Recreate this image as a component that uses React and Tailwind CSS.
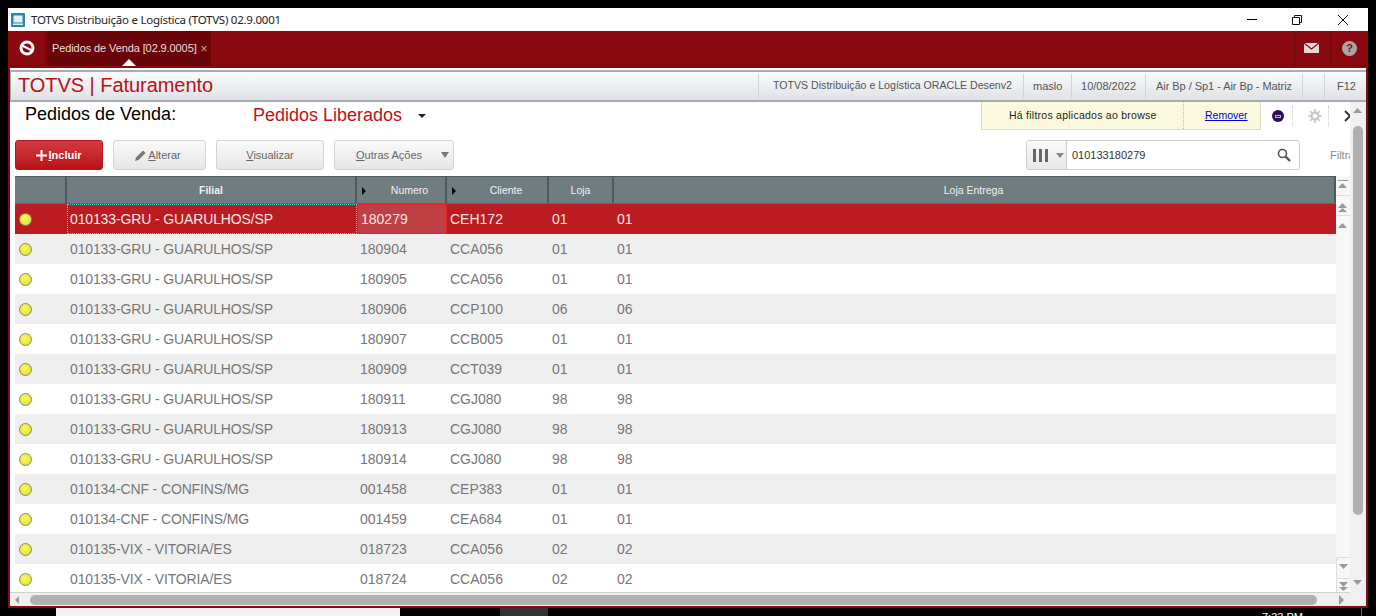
import React from 'react';

const rows = [
  ['010133-GRU - GUARULHOS/SP', '180279', 'CEH172', '01', '01'],
  ['010133-GRU - GUARULHOS/SP', '180904', 'CCA056', '01', '01'],
  ['010133-GRU - GUARULHOS/SP', '180905', 'CCA056', '01', '01'],
  ['010133-GRU - GUARULHOS/SP', '180906', 'CCP100', '06', '06'],
  ['010133-GRU - GUARULHOS/SP', '180907', 'CCB005', '01', '01'],
  ['010133-GRU - GUARULHOS/SP', '180909', 'CCT039', '01', '01'],
  ['010133-GRU - GUARULHOS/SP', '180911', 'CGJ080', '98', '98'],
  ['010133-GRU - GUARULHOS/SP', '180913', 'CGJ080', '98', '98'],
  ['010133-GRU - GUARULHOS/SP', '180914', 'CGJ080', '98', '98'],
  ['010134-CNF - CONFINS/MG', '001458', 'CEP383', '01', '01'],
  ['010134-CNF - CONFINS/MG', '001459', 'CEA684', '01', '01'],
  ['010135-VIX - VITORIA/ES', '018723', 'CCA056', '02', '02'],
  ['010135-VIX - VITORIA/ES', '018724', 'CCA056', '02', '02'],
];

const gridCols = 'grid grid-cols-[52px_290px_90px_102px_65px_1fr]';

const Arrow = ({ down = false, double = false, bar = false, className = '' }) => (
  <svg width="10" height="14" viewBox="0 0 10 14" className={className}>
    {bar && <rect x="0" y={down ? 12 : 1} width="10" height="1" fill="#999" />}
    <path d={down ? 'M0 3h9L4.500 8z' : 'M0 9h9L4.500 4z'} fill="#999" />
    {double && <path d={down ? 'M0 8h9L4.500 12z' : 'M0 13h9L4.500 9z'} fill="#999" />}
  </svg>
);

const Led = () => (
  <span className="block w-[13px] h-[13px] rounded-full border border-[#8a8a66] bg-[radial-gradient(circle_at_45%_40%,#fbfb60,#dcdc20)]" />
);

const ToolButton = ({ className = '', children }) => (
  <button className={`h-[30px] flex items-center justify-center rounded-[3px] border border-[#d4d4d4] bg-gradient-to-b from-[#fafafa] to-[#e6e6e6] text-[11px] text-[#666] ${className}`}>
    {children}
  </button>
);

const HeaderCell = ({ sort = false, children, className = '' }) => (
  <div className={`relative flex items-center justify-center pt-px border-r-2 border-[#4f5a5e] text-[10.500px] text-[#f1f1f1] ${className}`}>
    {sort && <span className="absolute left-[5px] top-[10px] w-0 h-0 border-y-[4px] border-y-transparent border-l-[4px] border-l-black" />}
    {children}
  </div>
);

export default function App() {
  return (
    <div className="w-[1376px] h-[616px] bg-black overflow-hidden pt-2 flex flex-col font-['Liberation_Sans',sans-serif]">
      <div className="w-[1360px] h-[600px] ml-2 flex flex-col shrink-0">
        {/* title bar */}
        <div className="h-[23px] bg-white flex items-center shrink-0">
          <svg width="14" height="14" viewBox="0 0 14 14" className="ml-[3px]">
            <rect width="14" height="14" rx="1" fill="#2b87a8" />
            <rect x="2.500" y="2.500" width="9" height="7" fill="#dff1f7" />
            <rect x="2" y="10.500" width="10" height="1.500" fill="#dff1f7" />
          </svg>
          <span className="ml-[6px] text-[11.500px] text-[#222] font-['Noto_Sans',sans-serif] tracking-[-0.25px]">TOTVS Distribuição e Logística (TOTVS) 02.9.0001</span>
          <div className="ml-auto flex items-center">
            <span className="w-[10px] h-px bg-black mr-[35px]" />
            <svg width="10" height="10" viewBox="0 0 10 10" fill="none" stroke="#111" className="mr-[36px]">
              <path d="M.5 2.500h7v7h-7zM2.500 2.500v-2h7v7h-2" />
            </svg>
            <svg width="10" height="10" viewBox="0 0 10 10" fill="none" stroke="#111" className="mr-[20px]">
              <path d="M0 0l10 10M10 0L0 10" />
            </svg>
          </div>
        </div>

        {/* red nav */}
        <div className="h-[37px] bg-[#8a0810] flex shrink-0">
          <div className="w-[38px] h-[35px] border-r border-b border-[#6e060c] flex items-center justify-center">
            <svg width="16" height="16" viewBox="0 0 16 16" fill="none" stroke="white">
              <circle cx="8" cy="8" r="6" strokeWidth="3" />
              <path d="M3 5.500l10 5" strokeWidth="2" />
            </svg>
          </div>
          <div className="relative w-[164px] h-[35px] ml-px bg-[#690509] flex items-center pl-[5px] text-[11px] text-[#f0dcdc] tracking-[-0.1px]">
            Pedidos de Venda [02.9.0005]
            <span className="ml-[4px] text-[12px] text-[#c9a0a0] leading-none">×</span>
            <span className="absolute left-[75px] bottom-0 w-0 h-0 border-x-[7px] border-x-transparent border-b-[7px] border-b-white" />
          </div>
          <div className="ml-auto flex">
            <div className="w-[37px] h-[35px] border-x border-b border-[#6e060c] flex items-center justify-center pr-[2px]">
              <svg width="15" height="10" viewBox="0 0 15 10">
                <rect width="15" height="10" fill="#e3d8d8" />
                <path d="M0 0l7.500 6L15 0" fill="none" stroke="#8a0810" strokeWidth="1.200" />
              </svg>
            </div>
            <div className="w-[37px] h-[35px] border-b border-[#6e060c] flex items-center justify-center">
              <span className="w-[15px] h-[15px] rounded-full bg-[#a5a5a5] flex items-center justify-center text-[11px] font-bold text-[#8a0810]">?</span>
            </div>
          </div>
        </div>

        {/* page frame */}
        <div className="flex-1 min-h-0 bg-white border-x-2 border-b-2 border-[#8a0810] flex flex-col">
          <div className="h-[2px] shrink-0" />
          <div className="h-[32px] shrink-0 border-y-2 border-[#a8acb0] bg-gradient-to-b from-[#fafbfc] to-[#dfe2e6] flex items-center text-[11px] text-[#555] border-l border-l-[#a8acb0]">
            <span className="ml-[7px] mb-[2px] text-[20px] text-[#bb1016] leading-none tracking-[-0.05px]">TOTVS | Faturamento</span>
            <div className="ml-auto flex items-center h-[24px] mr-[10px]">
              <span className="w-[265px] h-full flex items-center border-l border-[#d2d5d8] pl-[14px] text-[10.600px] whitespace-nowrap">TOTVS Distribuição e Logística ORACLE Desenv2</span>
              <span className="w-[48px] h-full flex items-center border-l border-[#d2d5d8] pl-[9px]">maslo</span>
              <span className="w-[74px] h-full flex items-center border-l border-[#d2d5d8] pl-[9px]">10/08/2022</span>
              <span className="w-[157px] h-full flex items-center border-l border-[#d2d5d8] pl-[10px] tracking-[-0.05px] whitespace-nowrap">Air Bp / Sp1 - Air Bp - Matriz</span>
              <span className="h-full flex items-center border-l border-r border-[#d2d5d8] w-[23px]" />
              <span className="pl-[12px]">F12</span>
            </div>
          </div>

          <div className="flex-1 min-h-0 flex">
            <div className="w-[1340px] flex flex-col min-w-0">
              {/* title and filter notice */}
              <div className="h-[29px] shrink-0 flex overflow-hidden">
                <span className="ml-[15px] w-[228px] shrink-0 text-[18px] leading-[25px] text-black">Pedidos de Venda:</span>
                <span className="text-[18px] leading-[27px] text-[#c0101a] w-[165px] shrink-0">Pedidos Liberados</span>
                <span className="mt-[12px] w-0 h-0 shrink-0 border-x-[4px] border-x-transparent border-t-[4px] border-t-[#222]" />
                <div className="ml-[555px] w-[280px] h-[28px] shrink-0 bg-[#fbfadf] border-x border-b border-[#dcdcc0] flex items-center text-[10.500px] text-[#222]">
                  <span className="w-[202px] pl-[27px] h-full flex items-center border-r border-dotted border-[#bbb] tracking-[0.25px] whitespace-nowrap">Há filtros aplicados ao browse</span>
                  <a className="ml-[21px] text-[#0000e0] underline">Remover</a>
                </div>
                <div className="flex items-center h-[28px] shrink-0">
                  <span className="ml-[11px] w-[12px] h-[12px] rounded-full bg-[#2b0f57] flex items-center justify-center">
                    <span className="w-[6px] h-[3px] border border-[#b9a8d8]" />
                  </span>
                  <span className="ml-[8px] h-[20px] border-l border-dotted border-[#ccc]" />
                  <svg width="14" height="14" viewBox="0 0 14 14" className="ml-[15px]" fill="none" stroke="#c8c8c8">
                    <circle cx="7" cy="7" r="3.500" strokeWidth="2.500" />
                    <path d="M7 0v3M7 11v3M0 7h3M11 7h3M2 2l2 2M10 10l2 2M12 2l-2 2M4 10l-2 2" strokeWidth="1.600" />
                  </svg>
                  <span className="ml-[6px] h-[20px] border-l border-dotted border-[#ccc]" />
                  <svg width="8" height="12" viewBox="0 0 8 12" className="ml-[15px] shrink-0" fill="none" stroke="#334" strokeWidth="2">
                    <path d="M1 1l5 5-5 5" />
                  </svg>
                </div>
              </div>

              {/* toolbar */}
              <div className="h-[30px] mt-[9px] shrink-0 flex items-center pl-[5px] gap-[10px]">
                <button className="w-[88px] h-[30px] rounded-[3px] border border-[#b0161c] bg-gradient-to-b from-[#d23a40] to-[#b80f16] text-white text-[11px] font-bold flex items-center justify-center">
                  <svg width="11" height="11" viewBox="0 0 11 11" className="mr-px" fill="white"><path d="M4.500 0h2v4.500H11v2H6.500V11h-2V6.500H0v-2h4.500z" /></svg>
                  <span><u>I</u>ncluir</span>
                </button>
                <ToolButton className="w-[93px] pr-[3px]">
                  <svg width="12" height="12" viewBox="0 0 12 12" className="mr-[1px]"><path d="M0 12l1-3.500 7-7L10.500 4l-7 7z" fill="#777" /></svg>
                  <span><u>A</u>lterar</span>
                </ToolButton>
                <ToolButton className="w-[108px]"><span><u>V</u>isualizar</span></ToolButton>
                <ToolButton className="w-[120px] justify-start pl-[21px]">
                  <span><u>O</u>utras Ações</span>
                  <span className="ml-[19px] w-0 h-0 border-x-[4px] border-x-transparent border-t-[6px] border-t-[#777]" />
                </ToolButton>
                <div className="ml-[562px] w-[274px] h-[30px] rounded-[3px] border border-[#ccc] flex items-center overflow-hidden">
                  <div className="w-[40px] h-full shrink-0 border-r border-[#ccc] bg-gradient-to-b from-[#fafafa] to-[#e8e8e8] flex items-center pl-[6px] gap-[3px]">
                    <span className="w-[3px] h-[13px] bg-[#666]" />
                    <span className="w-[3px] h-[13px] bg-[#666]" />
                    <span className="w-[3px] h-[13px] bg-[#666]" />
                    <span className="ml-[5px] w-0 h-0 border-x-[4px] border-x-transparent border-t-[5px] border-t-[#888]" />
                  </div>
                  <span className="ml-[5px] text-[11px] text-[#333]">010133180279</span>
                  <svg width="14" height="14" viewBox="0 0 14 14" className="ml-auto mr-[8px]" fill="none" stroke="#555">
                    <circle cx="5.500" cy="5.500" r="4" strokeWidth="1.600" />
                    <path d="M8.500 8.500l4.500 4.500" strokeWidth="2.400" />
                  </svg>
                </div>
                <span className="ml-[20px] w-[20px] overflow-hidden text-[11px] text-[#888]">Filtrar</span>
              </div>

              {/* table */}
              <div className="flex-1 min-h-0 mt-[6px] flex pl-[5px] overflow-hidden">
                <div className="w-[1321px] flex flex-col">
                  <div className={`${gridCols} h-[28px] shrink-0 bg-[#6f7c80] border-t border-[#4f5a5e] border-b border-b-[#59656a]`}>
                    <HeaderCell />
                    <HeaderCell className="font-bold">Filial</HeaderCell>
                    <HeaderCell sort className="pl-[17px]">Numero</HeaderCell>
                    <HeaderCell sort className="pl-[18px]">Cliente</HeaderCell>
                    <HeaderCell>Loja</HeaderCell>
                    <HeaderCell className="pr-[1px]">Loja Entrega</HeaderCell>
                  </div>
                  {rows.map((row, i) => {
                    const selected = i === 0;
                    const bg = selected ? 'bg-[#bb1c22] text-[#f5e6e6]' : i % 2 === 1 ? 'bg-[#efefef] text-[#777]' : 'bg-white text-[#777]';
                    return (
                      <div key={row[1]} className={`${gridCols} h-[30px] shrink-0 text-[14px] ${bg}`}>
                        <div className="flex items-center pl-[4px]"><Led /></div>
                        <div className={`flex items-center tracking-[-0.13px] ${selected ? 'pl-[2px] border border-dotted border-[#58d0d0]' : 'pl-[3px]'}`}>{row[0]}</div>
                        <div className={`flex items-center pl-[3px] ${selected ? 'bg-[#be4045] border border-[#ee1c20]' : ''}`}>{row[1]}</div>
                        <div className="flex items-center pl-[3px]">{row[2]}</div>
                        <div className="flex items-center pl-[3px]">{row[3]}</div>
                        <div className="flex items-center pl-[3px]">{row[4]}</div>
                      </div>
                    );
                  })}
                </div>

                {/* grid's own scroll buttons */}
                <div className="w-[14px] shrink-0 bg-[#f6f7f8] flex flex-col items-center">
                  <div className="w-full h-[20px] border-b border-[#ddd] flex items-center justify-center"><Arrow bar /></div>
                  <div className="w-full h-[20px] border-b border-[#ddd] flex items-center justify-center"><Arrow double /></div>
                  <div className="w-full h-[19px] flex items-center justify-center"><Arrow /></div>
                  <div className="mt-auto w-full h-[21px] border-t border-l border-[#ddd] rounded-tl-[3px] flex items-center justify-center"><Arrow down /></div>
                  <div className="w-full h-[14px] border-t border-l border-[#ddd] flex items-center justify-center overflow-hidden"><Arrow down double /></div>
                </div>
              </div>

              {/* horizontal scroll */}
              <div className="h-[14px] shrink-0 border-t border-[#d0d0d0] bg-[#f0f0f0] flex items-center">
                <span className="ml-[5px] w-0 h-0 border-y-[4px] border-y-transparent border-r-[4px] border-r-[#999]" />
                <span className="ml-[11px] w-[1287px] h-[10px] rounded-full bg-[#b0b0b0]" />
                <span className="ml-[22px] w-0 h-0 border-y-[5px] border-y-transparent border-l-[5px] border-l-[#999]" />
              </div>
            </div>

            {/* page scroll */}
            <div className="w-[16px] shrink-0 bg-[#f0f0f0] flex flex-col items-center">
              <Arrow className="mt-[2px]" />
              <span className="mt-[8px] w-[10px] h-[389px] rounded-full bg-[#b0b0b0]" />
              <Arrow down className="mt-[62px]" />
            </div>
          </div>
        </div>
      </div>

      {/* what shows of the desktop below the window */}
      <div className="h-[8px] flex shrink-0 relative">
        <span className="ml-[56px] w-[344px] bg-[#f2f2f2]" />
        <span className="ml-[100px] w-[48px] bg-[#333]" />
        <span className="ml-[714px] mt-[3px] text-[11px] leading-[12px] text-white">7:33 PM</span>
        <span className="ml-[58px] w-px bg-[#666]" />
      </div>
    </div>
  );
}
